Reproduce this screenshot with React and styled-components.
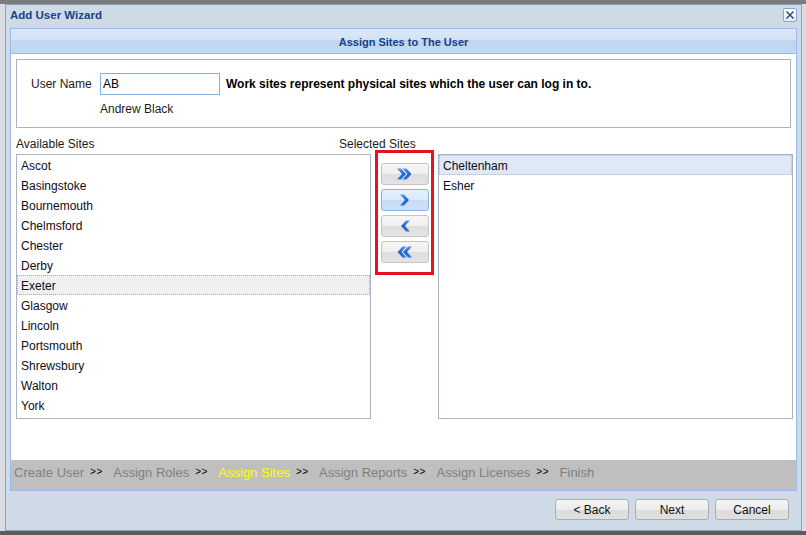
import React from "react";
import styled, { createGlobalStyle, css } from "styled-components";

const Global = createGlobalStyle`
  html, body { margin: 0; padding: 0; }
  body { font-family: "Liberation Sans", Arial, sans-serif; background: #d9dde3; }
  * { box-sizing: border-box; }
`;

const Page = styled.div`
  width: 806px;
  height: 535px;
  padding: 0 4px 0 5px;
  border-top: 4px solid #7c7c7c;
  border-bottom: 4px solid #5d5d5d;
  background: #d9dde3;
  overflow: hidden;
`;

const Dialog = styled.div`
  height: 100%;
  border: 1px solid #8fa1b8;
  background: #cfdae7;
  display: flex;
  flex-direction: column;
`;

const TitleBar = styled.div`
  height: 23px;
  display: flex;
  align-items: center;
  justify-content: space-between;
  padding: 0 4px 3px 4px;
`;

const Title = styled.div`
  font-size: 11.5px;
  font-weight: bold;
  color: #15428b;
`;

const CloseBtn = styled.div`
  width: 14px;
  height: 14px;
  border: 1px solid #8aa6cc;
  border-radius: 2px;
  background: linear-gradient(#ffffff, #e3ebf5);
  display: flex;
  align-items: center;
  justify-content: center;
`;

const Panel = styled.div`
  margin: 0 4px;
  height: 463px;
  border: 1px solid #99bbe8;
  display: flex;
  flex-direction: column;
`;

const PanelHeader = styled.div`
  height: 25px;
  flex: none;
  padding-top: 1px;
  border-bottom: 1px solid #99bbe8;
  background: linear-gradient(#dbe8f7 0%, #d3e2f5 45%, #c0d5ef 48%, #c4d8f1 100%);
  display: flex;
  align-items: center;
  justify-content: center;
  font-size: 11px;
  font-weight: bold;
  color: #15428b;
`;

const Body = styled.div`
  flex: 1;
  background: #fff;
  padding: 5px 5px 0 5px;
  display: flex;
  flex-direction: column;
`;

const UserBox = styled.div`
  height: 69px;
  border: 1px solid #aeb3c4;
  padding: 13px 0 0 14px;
  display: grid;
  grid-template-columns: 69px 120px 1fr;
  grid-template-rows: 22px 14px;
  align-content: start;
  row-gap: 7px;
  align-items: center;
  font-size: 12px;
  color: #111;
`;

const Label = styled.span`
  font-size: 12px;
  color: #1a1a1a;
  white-space: nowrap;
`;

const NameInput = styled.div`
  grid-column: 2;
  width: 120px;
  height: 22px;
  border: 1px solid #86b0dc;
  padding: 0 2px;
  display: flex;
  align-items: center;
  font-size: 12px;
  color: #000;
`;

const Note = styled.span`
  margin-left: 6px;
  font-weight: bold;
  font-size: 12px;
  color: #000;
  white-space: nowrap;
`;

const FullName = styled.span`
  grid-column: 2 / span 2;
  font-size: 12px;
  color: #1a1a1a;
`;

const LabelsRow = styled.div`
  display: flex;
  margin-top: 9px;
  height: 14px;
  line-height: 14px;
`;

const ColLabel = styled.span`
  font-size: 12px;
  color: #1a1a1a;
  width: ${(p) => p.$width || "auto"};
`;

const ListsGrid = styled.div`
  margin-top: 3px;
  display: grid;
  grid-template-columns: 355px 59px 355px;
  column-gap: 4px;
  align-items: start;
`;

const ListBox = styled.div`
  height: 265px;
  border: 1px solid #aeb3c4;
  overflow: hidden;
`;

const Item = styled.div`
  height: 20px;
  padding: 2px 0 0 3px;
  display: flex;
  align-items: center;
  font-size: 12px;
  color: #0d0d1a;
  border: 1px solid transparent;
  ${(p) =>
    p.$sel === "gray" &&
    css`
      background: #f0f0f0;
      border: 1px dotted #a8a8a8;
    `}
  ${(p) =>
    p.$sel === "blue" &&
    css`
      background: #dee8f6;
      border: 1px dotted #9fb8e6;
    `}
`;

const RedBox = styled.div`
  margin-top: -4px;
  height: 125px;
  border: 3px solid #e4141f;
  padding-top: 10px;
  display: flex;
  flex-direction: column;
  align-items: center;
  gap: 4px;
`;

const MoveBtn = styled.div`
  width: 48px;
  height: 22px;
  border-radius: 3px;
  border: 1px solid ${(p) => (p.$active ? "#8cb3e6" : "#c4c4c4")};
  background: ${(p) =>
    p.$active
      ? "linear-gradient(#e4f0fd 0%, #d9e9fc 50%, #c8dcf5 52%, #cfe1f8 100%)"
      : "linear-gradient(#f6f6f6 0%, #efefef 50%, #dedede 52%, #e4e4e4 100%)"};
  display: flex;
  align-items: center;
  justify-content: center;
`;

const StepsBar = styled.div`
  height: 30px;
  flex: none;
  background: #bfbfbf;
  display: flex;
  align-items: center;
  padding-left: 3px;
  padding-bottom: 6px;
`;

const Step = styled.span`
  font-size: 13px;
  color: ${(p) => (p.$current ? "#ffff00" : "#808080")};
  white-space: nowrap;
`;

const Sep = styled.span`
  font-size: 10px;
  color: #000;
  margin: 0 10.5px 0 6px;
  letter-spacing: 0.5px;
  position: relative;
  top: -1px;
`;

const Footer = styled.div`
  display: flex;
  justify-content: flex-end;
  gap: 6px;
  padding: 8px 12px 0 0;
`;

const FooterBtn = styled.div`
  width: 74px;
  height: 21px;
  border: 1px solid #acacac;
  border-radius: 3px;
  background: linear-gradient(#f4f4f4 0%, #ececec 50%, #dcdcdc 52%, #dfdfdf 100%);
  display: flex;
  align-items: center;
  justify-content: center;
  font-size: 12px;
  color: #111;
`;

const Chevron = ({ dir = "right", double = false }) => {
  const one = "M0 0 L4 0 L9 5.5 L4 11 L0 11 L5 5.5 Z";
  const w = double ? 15 : 10;
  return (
    <svg width={w} height="12" viewBox={`0 0 ${w} 12`}>
      <defs>
        <linearGradient id="chg" x1="0" y1="0" x2="0" y2="1">
          <stop offset="0" stopColor="#5c9af0" />
          <stop offset="0.5" stopColor="#1d62cc" />
          <stop offset="1" stopColor="#2f78e0" />
        </linearGradient>
      </defs>
      <g
        fill="url(#chg)"
        transform={dir === "left" ? `translate(${w} 0) scale(-1 1)` : undefined}
      >
        <path d={one} transform="translate(0 0.5)" />
        {double && <path d={one} transform="translate(5.5 0.5)" />}
      </g>
    </svg>
  );
};

const available = [
  "Ascot",
  "Basingstoke",
  "Bournemouth",
  "Chelmsford",
  "Chester",
  "Derby",
  "Exeter",
  "Glasgow",
  "Lincoln",
  "Portsmouth",
  "Shrewsbury",
  "Walton",
  "York",
];
const selected = ["Cheltenham", "Esher"];
const steps = [
  "Create User",
  "Assign Roles",
  "Assign Sites",
  "Assign Reports",
  "Assign Licenses",
  "Finish",
];

export default function App() {
  return (
    <>
      <Global />
      <Page>
        <Dialog>
          <TitleBar>
            <Title>Add User Wizard</Title>
            <CloseBtn>
              <svg width="10" height="10" viewBox="0 0 10 10">
                <path d="M1.5 1.5 L8.5 8.5 M8.5 1.5 L1.5 8.5" stroke="#23407a" strokeWidth="1.4" />
              </svg>
            </CloseBtn>
          </TitleBar>
          <Panel>
            <PanelHeader>Assign Sites to The User</PanelHeader>
            <Body>
              <UserBox>
                <Label>User Name</Label>
                <NameInput>AB</NameInput>
                <Note>Work sites represent physical sites which the user can log in to.</Note>
                <FullName>Andrew Black</FullName>
              </UserBox>
              <LabelsRow>
                <ColLabel $width="323px">Available Sites</ColLabel>
                <ColLabel>Selected Sites</ColLabel>
              </LabelsRow>
              <ListsGrid>
                <ListBox>
                  {available.map((s) => (
                    <Item key={s} $sel={s === "Exeter" ? "gray" : undefined}>
                      {s}
                    </Item>
                  ))}
                </ListBox>
                <RedBox>
                  <MoveBtn>
                    <Chevron dir="right" double />
                  </MoveBtn>
                  <MoveBtn $active>
                    <Chevron dir="right" />
                  </MoveBtn>
                  <MoveBtn>
                    <Chevron dir="left" />
                  </MoveBtn>
                  <MoveBtn>
                    <Chevron dir="left" double />
                  </MoveBtn>
                </RedBox>
                <ListBox>
                  {selected.map((s) => (
                    <Item key={s} $sel={s === "Cheltenham" ? "blue" : undefined}>
                      {s}
                    </Item>
                  ))}
                </ListBox>
              </ListsGrid>
            </Body>
            <StepsBar>
              {steps.map((s, i) => (
                <React.Fragment key={s}>
                  <Step $current={s === "Assign Sites"}>{s}</Step>
                  {i < steps.length - 1 && <Sep>&gt;&gt;</Sep>}
                </React.Fragment>
              ))}
            </StepsBar>
          </Panel>
          <Footer>
            <FooterBtn>&lt; Back</FooterBtn>
            <FooterBtn>Next</FooterBtn>
            <FooterBtn>Cancel</FooterBtn>
          </Footer>
        </Dialog>
      </Page>
    </>
  );
}
